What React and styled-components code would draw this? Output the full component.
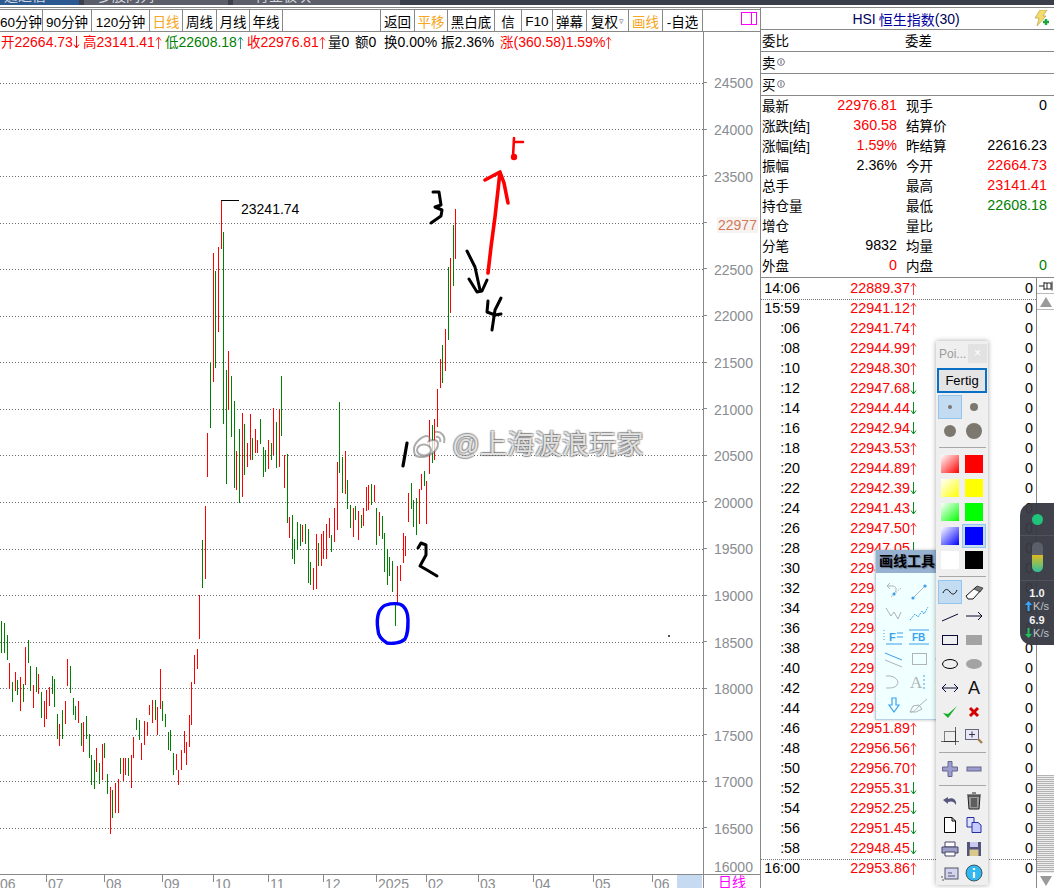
import React from 'react';
import styled, { createGlobalStyle } from 'styled-components';

const GlobalStyle = createGlobalStyle`
  html, body { margin: 0; padding: 0; background: #fff; }
  body { font-family: "Liberation Sans", "Noto Sans CJK SC", sans-serif; font-size: 14px; color: #000; }
`;

const LINE = '#888888';
const RED = '#ff0000';
const GREEN = '#008000';
const ORANGE = '#f5a623';

/* ---------- page frame ---------- */
const Page = styled.div`
  position: relative;
  width: 1054px;
  height: 888px;
  overflow: hidden;
  background: #fff;
`;

const TopStrip = styled.div`
  display: flex;
  height: 5px;
  overflow: hidden;
  background: #3b3e4b;
`;

const Tab = styled.div`
  width: ${p => p.$w}px;
  margin-right: ${p => p.$gap || 0}px;
  background: ${p => p.$tone};
  color: #d5d8de;
  font-size: 14px;
  line-height: 16px;
  padding-left: ${p => p.$pad}px;
  white-space: nowrap;
  overflow: hidden;
  & > span { display: block; margin-top: -12px; }
`;

const Main = styled.div`
  display: flex;
  height: 881px;
  margin-top: 2px;
  border-top: 1px solid ${LINE};
`;

const LeftColumn = styled.div`
  display: flex;
  flex-direction: column;
  width: 760px;
  flex: none;
`;

/* ---------- toolbar ---------- */
const Toolbar = styled.div`
  display: flex;
  height: 21px;
  margin-top: 1px;
  border-top: 1px solid ${LINE};
  border-bottom: 1px solid ${LINE};
  font-size: 13.5px;
`;

const ToolButton = styled.div`
  width: ${p => p.$w}px;
  flex: none;
  box-sizing: border-box;
  padding-top: 1px;
  display: flex;
  align-items: center;
  justify-content: center;
  white-space: nowrap;
  border-right: 1px solid ${LINE};
  color: ${p => (p.$on ? ORANGE : '#000')};
`;

const Caret = styled.span`
  color: #667;
  font-size: 9px;
  margin-left: 1px;
`;

const ToolSpacer = styled.div`
  width: ${p => p.$w}px;
  flex: none;
  box-sizing: border-box;
  border-right: ${p => (p.$last ? 'none' : `1px solid ${LINE}`)};
  display: flex;
  justify-content: flex-end;
  padding: 2px 3px 0 0;
`;

const WindowBox = styled.svg`
  display: block;
`;

/* ---------- chart ---------- */
const ChartRow = styled.div`
  display: flex;
  height: 842px;
`;

const Plot = styled.div`
  width: 703px;
  flex: none;
  display: flex;
  flex-direction: column;
  position: relative;
`;

const InfoRow = styled.div`
  display: flex;
  height: 20px;
  box-sizing: border-box;
  padding: 0 0 2px 1px;
  align-items: center;
  white-space: nowrap;
  font-size: 14px;
`;

const InfoField = styled.span`
  width: ${p => p.$w}px;
  flex: none;
  color: ${p => p.$color || '#000'};
`;

const Han = styled.span`
  font-size: 13.5px;
`;

const Axis = styled.div`
  width: 57px;
  flex: none;
  box-sizing: border-box;
  border-left: 1px solid ${LINE};
  padding-top: 28.2px;
  display: flex;
  flex-direction: column;
  color: #8a8d92;
  font-size: 14px;
`;

const Tick = styled.div`
  height: 46.6px;
  flex: none;
  display: flex;
  align-items: center;
  &::before {
    content: "";
    width: 3px;
    height: 1px;
    margin-right: 7px;
    background: ${LINE};
    transform: translateY(-1px);
  }
`;

const LastTick = styled.div`
  flex: 1;
  display: flex;
  align-items: flex-end;
  padding: 0 0 0 10px;
  line-height: 14px;
`;

const LastPrice = styled.span`
  margin: 3px 0 0 3px;
  padding: 0 1px;
  background: #f7f3f1;
  color: #d2785c;
  line-height: 16px;
`;

const BottomRow = styled.div`
  display: flex;
  flex: 1;
  border-top: 1px solid ${LINE};
`;

const TimeAxis = styled.div`
  width: 703px;
  flex: none;
  display: flex;
  overflow: hidden;
  color: #8a8d92;
  font-size: 14px;
`;

const Month = styled.div`
  width: ${p => p.$w}px;
  flex: none;
  box-sizing: border-box;
  margin-left: ${p => p.$shift || 0}px;
  padding: 1px 0 0 2px;
  line-height: 16px;
  white-space: nowrap;
  background: linear-gradient(${LINE}, ${LINE}) no-repeat left top / ${p => (p.$noTick ? '0' : '1px')} 7px;
`;

const Scope = styled.div`
  width: 25px;
  flex: none;
  background: #c6daf1;
`;

const PeriodCell = styled.div`
  width: 57px;
  flex: none;
  box-sizing: border-box;
  border-left: 1px solid ${LINE};
  color: #ff00ff;
  font-size: 14px;
  line-height: 14px;
  padding-left: 14px;
`;

/* ---------- right panel ---------- */
const Panel = styled.div`
  width: 294px;
  flex: none;
  box-sizing: border-box;
  border-left: 1px solid ${LINE};
  display: flex;
  flex-direction: column;
`;

const PanelHead = styled.div`
  height: 22px;
  box-sizing: border-box;
  border-bottom: 1px solid ${LINE};
  display: flex;
  align-items: center;
  justify-content: center;
  position: relative;
  padding-right: 3px;
  color: #00005a;
  font-size: 14px;
`;

const HeadName = styled.span`
  color: #0000a0;
  font-size: 14px;
  margin-left: 3px;
`;

const Bolt = styled.svg`
  position: absolute;
  right: 5px;
  top: 2px;
`;

const QuoteRow = styled.div`
  height: 22px;
  box-sizing: border-box;
  border-bottom: 1px solid ${LINE};
  padding: 0 0 2px 1px;
  display: flex;
  align-items: center;
  font-size: 13.5px;
`;

const QuoteCell = styled.span`
  width: ${p => p.$w}px;
  flex: none;
`;

const Circled = styled.svg`
  margin-left: 1px;
`;

const Stats = styled.div`
  height: 182px;
  box-sizing: border-box;
  border-bottom: 1px solid ${LINE};
  padding: 0 6px 0 1px;
  display: grid;
  grid-template-columns: 135px 141px;
  column-gap: 9px;
  grid-auto-rows: 20px;
`;

const StatCell = styled.div`
  display: flex;
  justify-content: space-between;
  align-items: center;
  padding-bottom: 2px;
  white-space: nowrap;
`;

const StatLabel = styled.span`
  font-size: 13.5px;
`;

const StatValue = styled.span`
  font-size: 14.3px;
  color: ${p => p.$color || '#000'};
`;

const TradesArea = styled.div`
  flex: 1;
  display: flex;
  min-height: 0;
`;

const TradeList = styled.div`
  width: 275px;
  flex: none;
  overflow: hidden;
`;

const TradeRow = styled.div`
  display: grid;
  grid-template-columns: 39px 117px 116px;
  height: ${p => (p.$sep ? 19 : 20)}px;
  margin-top: ${p => (p.$sep ? 1 : 0)}px;
  box-sizing: border-box;
  align-items: center;
  border-top: ${p => (p.$sep ? '1px dotted #777' : 'none')};
  padding-bottom: ${p => (p.$sep ? 2 : 0)}px;
  font-size: 14.3px;
`;

const TradeTime = styled.span`
  text-align: right;
`;

const TradePrice = styled.span`
  text-align: right;
  color: ${RED};
`;

const TradeVol = styled.span`
  text-align: right;
`;

const ArrowSvg = styled.svg`
  vertical-align: -2px;
`;

const ScrollBar = styled.div`
  width: 18px;
  flex: none;
  box-sizing: border-box;
  border-left: 1px solid ${LINE};
  display: flex;
  flex-direction: column;
`;

const ScrollButton = styled.div`
  height: 15px;
  flex: none;
  display: flex;
  align-items: center;
  justify-content: center;
  border-bottom: 1px solid #bbb;
`;

const ScrollTrack = styled.div`
  flex: 1;
  display: flex;
  flex-direction: column;
  justify-content: flex-end;
`;

const ScrollThumb = styled.div`
  height: 98px;
  background: repeating-linear-gradient(#b4b4b4 0 1px, #ececec 1px 2px);
`;

/* ---------- floating windows ---------- */
const DrawWindow = styled.div`
  position: absolute;
  left: 875px;
  top: 550px;
  width: 90px;
  height: 170px;
  box-sizing: border-box;
  background: #f0ffff;
  border: 1px solid #bcd0e4;
  border-top: none;
  box-shadow: 0 0 3px rgba(0, 0, 0, 0.25);
`;

const DrawTitle = styled.div`
  height: 23px;
  background: #97b1d0;
  font-weight: 700;
  font-size: 14px;
  line-height: 23px;
  padding-left: 3px;
  color: #000;
  text-shadow: 1px 1px 1px #5d6f8a;
`;

const DrawGrid = styled.div`
  display: grid;
  grid-template-columns: repeat(3, 25px);
  grid-auto-rows: 22.7px;
  padding: 7px 0 0 5px;
`;

const DrawCell = styled.div`
  display: flex;
  align-items: center;
  justify-content: center;
`;

const PointWindow = styled.div`
  position: absolute;
  left: 936px;
  top: 341px;
  width: 52px;
  height: 544px;
  box-sizing: border-box;
  padding: 3px 0 0 2px;
  background: #efefef;
  box-shadow: 0 0 5px rgba(0, 0, 0, 0.35);
`;

const PointTitle = styled.div`
  display: flex;
  justify-content: space-between;
  height: 20px;
  margin: 0 1px 4px 0;
  color: #9a9a9a;
  font-size: 12px;
  line-height: 20px;
  padding-left: 1px;
`;

const CloseBox = styled.div`
  width: 19px;
  height: 19px;
  background: #e2e2e2;
  color: #fff;
  text-align: center;
  line-height: 18px;
  font-size: 12px;
`;

const DoneButton = styled.div`
  width: 50px;
  height: 25px;
  box-sizing: border-box;
  margin: 0 0 2px -1px;
  border: 2px solid #0a70c6;
  background: #e4e4e4;
  text-align: center;
  font-size: 13px;
  line-height: 21px;
`;

const ButtonGrid = styled.div`
  display: grid;
  grid-template-columns: repeat(2, 24px);
  grid-auto-rows: 24px;
`;

const PointButton = styled.div`
  display: flex;
  align-items: center;
  justify-content: center;
  box-sizing: border-box;
  background: ${p => (p.$on ? '#c3dcf1' : 'transparent')};
  border: 1px solid ${p => (p.$on ? '#93c5ee' : 'transparent')};
  font-size: 18px;
  color: #111;
`;

const Swatch = styled.div`
  width: 18px;
  height: 18px;
  background: ${p => p.$fill};
`;

const Divider = styled.div`
  height: 1px;
  background: #a8a8a8;
  margin: 4px 2px 3.5px 1px;
`;

/* ---------- net speed widget ---------- */
const NetWidget = styled.div`
  position: absolute;
  left: 1020px;
  top: 503px;
  width: 34px;
  height: 142px;
  box-sizing: border-box;
  background: rgba(55, 58, 68, 0.96);
  border-radius: 12px 0 0 12px;
  display: flex;
  flex-direction: column;
  align-items: center;
  color: #dfe2e8;
`;

const NetDot = styled.div`
  width: 11px;
  height: 11px;
  border-radius: 50%;
  background: #1fc47a;
  margin: 11px 0 10px;
  flex: none;
`;

const NetRule = styled.div`
  width: 100%;
  height: 1px;
  background: #50535e;
  flex: none;
`;

const NetPill = styled.div`
  width: 11px;
  height: 30px;
  margin: 6px 0 8px;
  flex: none;
  border-radius: 6px;
  background: linear-gradient(#5b5f69 0 43%, #e0b81e 43%, #8cc05a 70%, #2dbfa0 100%);
`;

const NetValue = styled.div`
  font-size: 11px;
  font-weight: 700;
  line-height: 13px;
  color: #f2f3f5;
  margin-top: ${p => p.$top}px;
`;

const NetRate = styled.div`
  display: flex;
  align-items: center;
  gap: 1px;
  font-size: 11px;
  line-height: 12px;
  color: #bfc2c9;
`;

/* ---------- watermark ---------- */
const Watermark = styled.div`
  position: absolute;
  left: 410px;
  top: 396px;
  display: flex;
  align-items: center;
  gap: 2px;
  white-space: nowrap;
  font-size: 27.3px;
  line-height: 34px;
  color: rgba(255, 255, 255, 0.75);
  text-shadow: -1px -1px 1px rgba(90, 90, 90, 0.45), 1px 1px 1px rgba(90, 90, 90, 0.45),
    1px -1px 1px rgba(90, 90, 90, 0.45), -1px 1px 1px rgba(90, 90, 90, 0.45);
`;

/* ---------- data ---------- */
const bars = [
  [1,621,653,'g'],[4,623,653,'g'],[7,635,660,'g'],[9,663,689,'r'],[12,682,702,'g'],[15,672,691,'r'],[17,680,695,'g'],
  [20,677,711,'r'],[23,684,702,'g'],[25,647,685,'r'],[28,640,663,'g'],[30,666,691,'g'],[33,685,708,'r'],[36,667,692,'g'],
  [38,674,694,'r'],[41,692,718,'g'],[44,701,727,'r'],[46,690,719,'r'],[49,687,706,'r'],[52,676,694,'g'],[54,679,707,'g'],
  [57,714,739,'g'],[59,724,746,'r'],[62,710,739,'g'],[65,701,724,'r'],[67,659,686,'r'],[70,666,693,'g'],[73,698,715,'g'],
  [75,706,720,'g'],[78,701,723,'r'],[81,723,746,'g'],[83,722,752,'r'],[86,716,739,'g'],[89,734,758,'g'],[91,755,785,'g'],
  [94,760,789,'g'],[96,748,772,'r'],[99,763,784,'g'],[102,744,780,'r'],[104,743,758,'g'],[107,774,794,'g'],[110,787,834,'r'],
  [112,790,818,'g'],[115,783,813,'r'],[118,779,813,'r'],[120,758,774,'g'],[123,758,781,'r'],[125,758,775,'r'],[128,758,776,'g'],
  [131,755,788,'r'],[133,737,758,'r'],[136,718,730,'g'],[139,720,740,'g'],[141,743,760,'r'],[144,721,745,'r'],[147,722,736,'r'],
  [149,705,715,'r'],[152,700,723,'r'],[155,700,720,'g'],[157,707,735,'r'],[160,669,709,'r'],[162,701,721,'g'],[165,714,727,'g'],
  [168,732,750,'g'],[170,730,751,'g'],[173,753,775,'g'],[176,754,770,'r'],[178,770,785,'r'],[181,750,770,'r'],[184,731,753,'r'],
  [186,742,765,'r'],[189,715,747,'r'],[191,682,725,'r'],[194,655,684,'r'],[197,649,669,'r'],[199,595,639,'r'],[202,540,588,'g'],
  [205,506,579,'r'],[207,433,477,'r'],[210,363,428,'g'],[213,253,382,'r'],[215,271,368,'g'],[218,247,332,'r'],[221,200,249,'r'],
  [223,232,424,'g'],[226,370,484,'g'],[228,351,410,'r'],[231,376,437,'g'],[234,401,488,'g'],[236,451,490,'r'],[239,429,503,'g'],
  [242,413,497,'r'],[244,424,475,'g'],[247,443,467,'r'],[250,414,460,'r'],[252,438,460,'g'],[255,429,453,'r'],[257,440,453,'r'],
  [260,419,444,'g'],[263,447,477,'g'],[265,450,472,'g'],[268,440,469,'r'],[271,443,460,'g'],[273,408,455,'r'],[276,422,468,'g'],
  [279,409,467,'r'],[281,376,436,'g'],[284,455,488,'r'],[287,454,523,'g'],[289,517,538,'r'],[292,515,559,'g'],[294,539,564,'g'],
  [297,522,550,'g'],[300,524,546,'g'],[302,525,542,'r'],[305,524,544,'g'],[308,529,583,'g'],[310,562,585,'g'],[313,568,590,'r'],
  [316,534,589,'r'],[318,543,566,'g'],[321,534,566,'r'],[323,531,559,'r'],[326,524,559,'r'],[329,518,538,'r'],[331,535,552,'g'],
  [334,508,542,'r'],[337,462,530,'r'],[339,402,473,'g'],[342,457,493,'g'],[345,451,494,'r'],[347,480,509,'g'],[350,505,528,'g'],
  [353,508,537,'r'],[355,506,520,'g'],[358,511,540,'r'],[361,515,528,'g'],[363,508,526,'r'],[366,487,511,'r'],[368,485,510,'r'],
  [371,484,505,'g'],[374,485,502,'r'],[376,508,545,'g'],[379,512,536,'r'],[382,516,539,'g'],[384,533,572,'g'],[387,549,585,'g'],
  [389,557,576,'g'],[392,561,592,'g'],[395,602,626,'g'],[397,566,605,'r'],[400,565,581,'r'],[403,533,563,'r'],[405,536,556,'r'],
  [408,493,522,'r'],[411,483,509,'g'],[413,500,527,'g'],[416,498,535,'g'],[419,489,524,'r'],[421,474,490,'r'],[424,471,486,'g'],
  [426,481,524,'r'],[429,420,474,'r'],[432,425,463,'g'],[434,419,460,'r'],[437,389,427,'r'],[440,359,388,'r'],[442,345,383,'g'],
  [445,329,371,'r'],[448,267,340,'g'],[450,258,313,'r'],[453,225,286,'g'],[455,209,259,'r'],
];

const gridLines = [83,129,176,223,269,316,362,409,455,502,549,595,642,688,735,781,828];
const axisLabels = [24500,24000,23500,22977,22500,22000,21500,21000,20500,20000,19500,19000,18500,18000,17500,17000,16500];

const tradeRows = [
  ['14:06','22889.37','u'],['15:59','22941.12','u',true],[':06','22941.74','u'],[':08','22944.99','u'],[':10','22948.30','u'],
  [':12','22947.68','d'],[':14','22944.44','d'],[':16','22942.94','d'],[':18','22943.53','u'],[':20','22944.89','u'],
  [':22','22942.39','d'],[':24','22941.43','d'],[':26','22947.50','u'],[':28','22947.05','d'],[':30','22948.12','u'],
  [':32','22949.36','u'],[':34','22950.18','u'],[':36','22949.72','d'],[':38','22950.64','u'],[':40','22951.20','u'],
  [':42','22950.83','d'],[':44','22951.02','u'],[':46','22951.89','u'],[':48','22956.56','u'],[':50','22956.70','u'],
  [':52','22955.31','d'],[':54','22952.25','d'],[':56','22951.45','d'],[':58','22948.45','d'],['16:00','22953.86','u',true],
];

const stats = [
  ['最新','22976.81',RED,'现手','0','#000'],
  ['涨跌[结]','360.58',RED,'结算价','',''],
  ['涨幅[结]','1.59%',RED,'昨结算','22616.23','#000'],
  ['振幅','2.36%','#000','今开','22664.73',RED],
  ['总手','','','最高','23141.41',RED],
  ['持仓量','','','最低','22608.18',GREEN],
  ['增仓','','','量比','',''],
  ['分笔','9832','#000','均量','',''],
  ['外盘','0',RED,'内盘','0',GREEN],
];

const months = [
  { w: 48, label: '06', noTick: true, shift: -2 },
  { w: 58, label: '07' }, { w: 58, label: '08' }, { w: 51, label: '09' }, { w: 55, label: '10' },
  { w: 55, label: '11' }, { w: 53, label: '12' }, { w: 50, label: '2025' }, { w: 52, label: '02' },
  { w: 55, label: '03' }, { w: 60, label: '04' }, { w: 59, label: '05' }, { w: 25, label: '06' },
];

/* ---------- drawings ---------- */
const Ink = ({ d, color = '#000', width = 3 }) => (
  <path d={d} fill="none" stroke={color} strokeWidth={width} strokeLinecap="round" strokeLinejoin="round" />
);

const Chart = () => (
  <svg width="703" height="822" viewBox="0 52 703 822" style={{ display: 'block' }}>
    {gridLines.map(y => (
      <line key={y} x1="0" x2="703" y1={y + 0.5} y2={y + 0.5} stroke="#6e6e6e" strokeDasharray="1 2" />
    ))}
    {bars.map(([x, top, bottom, c]) => (
      <rect key={x} x={x} y={top} width="1" height={bottom - top} fill={c === 'r' ? RED : GREEN} />
    ))}
    <rect x="221" y="200" width="18" height="1" fill="#000" />
    <text x="241" y="214" fontSize="14" fontFamily="Liberation Sans" fill="#000">23241.74</text>
    <rect x="668" y="635" width="2" height="2" fill="#555" />

    {/* hand drawn wave marks */}
    <Ink d="M514 138 L513 157 M514 142 L523 142" color={RED} width="2.6" />
    <circle cx="514" cy="157" r="3.2" fill={RED} />
    <Ink d="M488 273 L491 247 L495 217 L498 190 L500 172 M485 180 L500 172 L504 183 L508 203" color={RED} width="3.6" />
    <Ink d="M433 192 L439 192 L441 205 L435 207 L442 210 L441 216 L431 223" />
    <Ink d="M467 251 L475 267 L480 290 M469 279 L477 292 L482 291 L487 280" />
    <Ink d="M488 301 L487 312 L495 315 L501 314 M501 298 L495 310 L492 330" />
    <Ink d="M407 443 L403 466" width="3.2" />
    <Ink d="M418 548 L421 543 L426 545 L426 555 L420 566 L427 570 L437 576" />
    <Ink d="M386 605 C392 603 400 603 403 606 C407 610 408 614 408 620 C408 628 408 634 405 639 C401 643 392 644 387 643 C382 640 378 636 378 630 C377 624 377 617 379 612 C381 608 383 606 386 605 Z" color="#0000ff" width="3.4" />
  </svg>
);

const WeiboMark = () => (
  <svg width="40" height="34" viewBox="0 0 40 34" style={{ flex: 'none' }}>
    <g fill="rgba(255,255,255,.75)" stroke="rgba(90,90,90,.5)" strokeWidth="2">
      <path d="M4 21c0-6 8-13 13-13 3 0 3 3 2 5 5-2 9-1 9 3 0 7-9 13-16 13S4 27 4 21z" />
      <ellipse cx="14" cy="22" rx="7" ry="5.5" />
      <path d="M25 4c6-1 11 4 9 11M26 9c3-1 5 2 4 5" fill="none" />
    </g>
  </svg>
);

const Bolt16 = () => (
  <Bolt width="15" height="17" viewBox="0 0 15 17">
    <path d="M6 0 L13 0 L9 6 L12 6 L3 16 L5 8 L1 8 Z" fill="#f3dc6a" stroke="#b8a24a" strokeWidth="0.7" />
    <path d="M9 12 h6 M12 9 v6" stroke="#18a83a" strokeWidth="2.4" />
  </Bolt>
);

const CircledOne = () => (
  <Circled width="8" height="8" viewBox="0 0 8 8">
    <circle cx="4" cy="4" r="3.4" fill="none" stroke="#667" strokeWidth="0.9" />
    <path d="M4 2 V6" stroke="#667" />
  </Circled>
);

const Arrow = ({ dir, color }) => (
  <ArrowSvg width="7" height="13" viewBox="0 0 7 13">
    <path
      d={dir === 'u' ? 'M3.5 1 V13 M1 4.5 L3.5 1 L6 4.5' : 'M3.5 0 V12 M1 8.5 L3.5 12 L6 8.5'}
      fill="none"
      stroke={color || (dir === 'u' ? '#ff3a3a' : '#0a8a28')}
    />
  </ArrowSvg>
);

const TI = ({ children, w = 20, h = 20 }) => (
  <svg width={w} height={h} viewBox={`0 0 ${w} ${h}`}>{children}</svg>
);

const pointIcons = [
  <TI><path d="M3 11 C5 6 8 7 10 10 C12 13 15 13 17 8" fill="none" stroke="#111" /></TI>,
  <TI><path d="M2 14 L12 5 L18 7 L9 17 L4 17 Z" fill="#fff" stroke="#111" /><path d="M10 7 L13 4 L19 6 L16 10 Z" fill="#777" stroke="#111" strokeWidth="0.6" /></TI>,
  <TI><path d="M2 15 L18 8" stroke="#0a0a33" fill="none" /></TI>,
  <TI><path d="M2 10 H18 M14 6 L18 10 L14 14" stroke="#0a0a33" fill="none" /></TI>,
  <TI><rect x="2.5" y="5.5" width="15" height="9" fill="none" stroke="#0a0a33" /></TI>,
  <TI><rect x="2" y="5" width="16" height="10" fill="#a3a3a3" /></TI>,
  <TI><ellipse cx="10" cy="10" rx="7.5" ry="4.5" fill="none" stroke="#000" /></TI>,
  <TI><ellipse cx="10" cy="10" rx="8" ry="5" fill="#a3a3a3" /></TI>,
  <TI><path d="M2 10 H18 M6 6 L2 10 L6 14 M14 6 L18 10 L14 14" stroke="#0a0a33" fill="none" /></TI>,
  'A',
  <TI><path d="M3 11 L8 16 L17 4 L8 12 Z" fill="#18b028" /></TI>,
  <TI><path d="M6 6 L14 14 M14 6 L6 14" stroke="#d40000" strokeWidth="3" /></TI>,
  <TI><path d="M1 15.5 H19 M15.5 1 V19" stroke="#666" fill="none" /><rect x="4.5" y="5.5" width="11" height="10" fill="none" stroke="#111" strokeDasharray="1 1" /></TI>,
  <TI><rect x="1.5" y="3.5" width="13" height="10" fill="#e8e8f8" stroke="#667" /><path d="M5 8.5 H11 M8 5.5 V11.5" stroke="#334" /><path d="M14 13 L18 17" stroke="#a58050" strokeWidth="2.4" /></TI>,
  <TI><path d="M8 2.5 H12 V8 H17.5 V12 H12 V17.5 H8 V12 H2.5 V8 H8 Z" fill="#9c9ccf" stroke="#66668f" /></TI>,
  <TI><rect x="3" y="8" width="14" height="4" fill="#9c9ccf" stroke="#66668f" /></TI>,
  <TI><path d="M3 9 L8 6 V8 C12 6 17 8 16 14 C14 10 11 10 8 11 V13 Z" fill="#56567e" /></TI>,
  <TI><path d="M4 5 H16 L15 18 H5 Z" fill="#9a9a9a" stroke="#222" /><path d="M3 4 H17 M8 2 H12 M8 7 V16 M10 7 V16 M12 7 V16" stroke="#222" /></TI>,
  <TI><path d="M4.5 2.5 H12 L15.5 6 V17.5 H4.5 Z M12 2.5 V6 H15.5" fill="#fff" stroke="#000" /></TI>,
  <TI><path d="M3 2.5 H10 V12 H3 Z" fill="#dfe2ff" stroke="#2530a0" /><path d="M8 7.5 H14 L17 10 V17.5 H8 Z" fill="#c6ccff" stroke="#2530a0" /></TI>,
  <TI><path d="M5 3 H15 V8 H5 Z" fill="#fff" stroke="#446" /><path d="M2 8 H18 V14 H2 Z" fill="#9ca0c8" stroke="#446" /><path d="M5 13 H15 V17 H5 Z" fill="#fff" stroke="#446" /></TI>,
  <TI><rect x="3" y="3" width="14" height="14" fill="#53537c" /><rect x="6" y="3" width="8" height="5" fill="#c9c9ee" /><rect x="5.5" y="10.5" width="9" height="6.5" fill="#d8c88a" /></TI>,
  <TI><rect x="5" y="5" width="13" height="11" fill="#d2d4f0" stroke="#556" /><path d="M8 10 H12 M8 13 H15 M1 14 H3 M2 17 H4" stroke="#556" /></TI>,
  <TI><circle cx="10" cy="10" r="8" fill="#32b8f0" stroke="#222" strokeWidth="0.7" /><path d="M10 9 V15 M10 5 V7" stroke="#fff" strokeWidth="2.2" /></TI>,
];

const G = '#aeb4b8';
const B = '#3aa3ee';
// three columns, six rows; the third column sits mostly behind the point window
const drawIcons = [
  <TI w={22}><path d="M10 5 H4 M4 5 L7 2 M4 5 L7 8 M10 5 C14 6 14 10 11 12" stroke={G} fill="none" /><path d="M8 16 L18 7" stroke={G} strokeDasharray="2 1" /><circle cx="11" cy="13" r="1.6" fill={B} /></TI>,
  <TI w={22}><path d="M5 17 L17 5" stroke={G} /><circle cx="5" cy="17" r="1.6" fill={B} /><circle cx="17" cy="5" r="1.6" fill={B} /></TI>,
  <TI w={22}><path d="M3 14 L18 6" stroke={G} /></TI>,
  <TI w={22}><path d="M3 4 L8 12 L11 8 L15 15 L18 8" stroke={G} fill="none" /></TI>,
  <TI w={22}><path d="M2 16 L7 10 L10 13 L14 7 L16 10 L20 3" stroke={B} strokeDasharray="2 1" fill="none" /></TI>,
  <TI w={22}><path d="M3 14 L9 7 L12 11 L18 5" stroke={G} strokeDasharray="2 1" fill="none" /></TI>,
  <TI w={22}><path d="M1 3 V14" stroke={B} strokeDasharray="1 2" /><path d="M3 17 H19" stroke={B} /><text x="6" y="14" fontSize="11" fontWeight="700" fontFamily="Liberation Sans" fill={B}>F</text><path d="M14 6 H20 M14 10 H20" stroke={B} /></TI>,
  <TI w={22}><path d="M1 3 H21 M1 17 H21" stroke={B} /><text x="4" y="14" fontSize="10" fontWeight="700" fontFamily="Liberation Sans" fill={B}>FB</text></TI>,
  <TI w={22}><path d="M3 5 H14 M3 10 H14 M3 15 H14" stroke={B} /></TI>,
  <TI w={22}><path d="M2 4 L19 11" stroke={B} /><path d="M2 11 L19 18" stroke={G} /></TI>,
  <TI w={22}><rect x="4.5" y="4.5" width="14" height="11" fill="none" stroke={G} /></TI>,
  <TI w={22}><ellipse cx="11" cy="10" rx="8" ry="6" fill="none" stroke={G} /></TI>,
  <TI w={22}><path d="M3 4 C12 3 17 9 14 13 C12 16 8 16 3 16" stroke={G} fill="none" /></TI>,
  <TI w={22}><text x="2" y="16" fontSize="17" fontFamily="Liberation Serif" fill={G}>A</text><path d="M16 3 V18" stroke={B} strokeDasharray="2 2" /></TI>,
  <TI w={22}><circle cx="11" cy="10" r="7.5" fill="none" stroke={G} strokeWidth="1.5" /></TI>,
  <TI w={22}><path d="M9 3 H13 V10 H16 L11 17 L6 10 H9 Z" fill="none" stroke={B} strokeWidth="1.2" /></TI>,
  <TI w={22}><path d="M2 17 C7 17 8 14 11 11 L19 4 M2 17 L5 11 L11 10 L14 14 L8 17 Z" stroke={G} fill="none" /></TI>,
  <TI w={22}><path d="M3 5 H12 M3 10 H12" stroke={B} /></TI>,
];

const swatches = [
  ['linear-gradient(135deg,#fff,#ff0000)', RED],
  ['linear-gradient(135deg,#fff,#ffff00)', '#ffff00'],
  ['linear-gradient(135deg,#fff,#00ff00)', '#00ff00'],
  ['linear-gradient(135deg,#fff,#0000ff)', '#0000ff'],
  ['#ffffff', '#000000'],
];

const Dot = ({ r }) => (
  <svg width="20" height="20" viewBox="0 0 20 20"><circle cx="10" cy="10" r={r} fill="#7c786f" /></svg>
);

export default function App() {
  return (
    <Page>
      <GlobalStyle />
      <TopStrip>
        <Tab $w={75} $gap={5} $tone="#2c5a90" $pad={4}><span>通达信</span></Tab>
        <Tab $w={130} $gap={5} $tone="#5c5f6a" $pad={14}><span>多股同列</span></Tab>
        <Tab $w={145} $tone="#5c5f6a" $pad={22}><span>行业板块</span></Tab>
      </TopStrip>

      <Main>
        <LeftColumn>
          <Toolbar>
            <ToolButton $w={43}>60分钟</ToolButton>
            <ToolButton $w={49}>90分钟</ToolButton>
            <ToolButton $w={58}>120分钟</ToolButton>
            <ToolButton $w={33} $on>日线</ToolButton>
            <ToolButton $w={34}>周线</ToolButton>
            <ToolButton $w={33}>月线</ToolButton>
            <ToolButton $w={33}>年线</ToolButton>
            <ToolSpacer $w={98} />
            <ToolButton $w={34}>返回</ToolButton>
            <ToolButton $w={33} $on>平移</ToolButton>
            <ToolButton $w={47}>黑白底</ToolButton>
            <ToolButton $w={27}>信</ToolButton>
            <ToolButton $w={31}>F10</ToolButton>
            <ToolButton $w={34}>弹幕</ToolButton>
            <ToolButton $w={42}>复权<Caret>▿</Caret></ToolButton>
            <ToolButton $w={34} $on>画线</ToolButton>
            <ToolButton $w={40}>-自选</ToolButton>
            <ToolSpacer $w={57} $last>
              <WindowBox width="16" height="13" viewBox="0 0 16 13">
                <rect x="0.5" y="0.5" width="15" height="12" fill="none" stroke="#ff00ff" />
                <path d="M10.5 0 V13" stroke="#ff00ff" />
              </WindowBox>
            </ToolSpacer>
          </Toolbar>

          <ChartRow>
            <Plot>
              <InfoRow>
                <InfoField $w={82} $color={RED}><Han>开</Han>22664.73<Arrow dir="d" color={RED} /></InfoField>
                <InfoField $w={82} $color={RED}><Han>高</Han>23141.41<Arrow dir="u" /></InfoField>
                <InfoField $w={82} $color={GREEN}><Han>低</Han>22608.18<Arrow dir="u" color="#2a9a8a" /></InfoField>
                <InfoField $w={81} $color={RED}><Han>收</Han>22976.81<Arrow dir="u" /></InfoField>
                <InfoField $w={27}><Han>量</Han>0</InfoField>
                <InfoField $w={29}><Han>额</Han>0</InfoField>
                <InfoField $w={57}><Han>换</Han>0.00%</InfoField>
                <InfoField $w={59}><Han>振</Han>2.36%</InfoField>
                <InfoField $w={125} $color={RED}><Han>涨</Han>(360.58)1.59%<Arrow dir="u" /></InfoField>
              </InfoRow>
              <Chart />
              <Watermark>
                <WeiboMark />
                <span>@上海波浪玩家</span>
              </Watermark>
            </Plot>
            <Axis>
              {axisLabels.map(v => (
                <Tick key={v}>{v === 22977 ? <LastPrice>{v}</LastPrice> : v}</Tick>
              ))}
              <LastTick>16000</LastTick>
            </Axis>
          </ChartRow>

          <BottomRow>
            <TimeAxis>
              {months.map((m, i) => (
                <Month key={i} $w={m.w} $noTick={m.noTick} $shift={m.shift}>{m.label}</Month>
              ))}
              <Scope />
            </TimeAxis>
            <PeriodCell>日线</PeriodCell>
          </BottomRow>
        </LeftColumn>

        <Panel>
          <PanelHead>HSI<HeadName>恒生指数</HeadName>(30)<Bolt16 /></PanelHead>
          <QuoteRow><QuoteCell $w={143}>委比</QuoteCell><QuoteCell $w={60}>委差</QuoteCell></QuoteRow>
          <QuoteRow>卖<CircledOne /></QuoteRow>
          <QuoteRow>买<CircledOne /></QuoteRow>
          <Stats>
            {stats.map(s => (
              <React.Fragment key={s[0]}>
                <StatCell><StatLabel>{s[0]}</StatLabel><StatValue $color={s[2]}>{s[1]}</StatValue></StatCell>
                <StatCell><StatLabel>{s[3]}</StatLabel><StatValue $color={s[5]}>{s[4]}</StatValue></StatCell>
              </React.Fragment>
            ))}
          </Stats>
          <TradesArea>
            <TradeList>
              {tradeRows.map(([time, price, dir, sep]) => (
                <TradeRow key={time} $sep={sep}>
                  <TradeTime>{time}</TradeTime>
                  <TradePrice>{price}<Arrow dir={dir} /></TradePrice>
                  <TradeVol>0</TradeVol>
                </TradeRow>
              ))}
            </TradeList>
            <ScrollBar>
              <ScrollButton>
                <svg width="14" height="12" viewBox="0 0 14 12">
                  <path d="M0 6 H5 M5 2 V10 M5 3 H12 V9 H5 M8 3 V9 M13 1.5 V10.5" stroke="#222" fill="none" />
                </svg>
              </ScrollButton>
              <ScrollButton>
                <svg width="12" height="10" viewBox="0 0 12 10"><path d="M6 0 L12 10 H0 Z" fill="#9a9a9a" /></svg>
              </ScrollButton>
              <ScrollTrack><ScrollThumb /></ScrollTrack>
              <ScrollButton>
                <svg width="12" height="10" viewBox="0 0 12 10"><path d="M6 10 L12 0 H0 Z" fill="#9a9a9a" /></svg>
              </ScrollButton>
            </ScrollBar>
          </TradesArea>
        </Panel>
      </Main>

      <DrawWindow>
        <DrawTitle>画线工具</DrawTitle>
        <DrawGrid>
          {drawIcons.map((icon, i) => <DrawCell key={i}>{icon}</DrawCell>)}
        </DrawGrid>
      </DrawWindow>

      <PointWindow>
        <PointTitle>Poi...<CloseBox>×</CloseBox></PointTitle>
        <DoneButton>Fertig</DoneButton>
        <ButtonGrid>
          <PointButton $on><Dot r={2} /></PointButton>
          <PointButton><Dot r={4} /></PointButton>
          <PointButton><Dot r={6} /></PointButton>
          <PointButton><Dot r={8} /></PointButton>
        </ButtonGrid>
        <Divider />
        <ButtonGrid>
          {swatches.map(([soft, solid]) => (
            <React.Fragment key={solid}>
              <PointButton><Swatch $fill={soft} /></PointButton>
              <PointButton $on={solid === '#0000ff'}><Swatch $fill={solid} /></PointButton>
            </React.Fragment>
          ))}
        </ButtonGrid>
        <Divider />
        <ButtonGrid>
          {pointIcons.slice(0, 14).map((icon, i) => (
            <PointButton key={i} $on={i === 0}>{icon}</PointButton>
          ))}
        </ButtonGrid>
        <Divider />
        <ButtonGrid>
          {pointIcons.slice(14, 16).map((icon, i) => <PointButton key={i}>{icon}</PointButton>)}
        </ButtonGrid>
        <Divider />
        <ButtonGrid>
          {pointIcons.slice(16).map((icon, i) => <PointButton key={i}>{icon}</PointButton>)}
        </ButtonGrid>
      </PointWindow>

      <NetWidget>
        <NetDot />
        <NetRule />
        <NetPill />
        <NetRule />
        <NetValue $top={6}>1.0</NetValue>
        <NetRate>
          <svg width="7" height="10" viewBox="0 0 7 10"><path d="M3.5 0 L7 4 H4.5 V10 H2.5 V4 H0 Z" fill="#35a8ff" /></svg>
          K/s
        </NetRate>
        <NetValue $top={2}>6.9</NetValue>
        <NetRate>
          <svg width="7" height="10" viewBox="0 0 7 10"><path d="M3.5 10 L7 6 H4.5 V0 H2.5 V6 H0 Z" fill="#1cc45c" /></svg>
          K/s
        </NetRate>
      </NetWidget>
    </Page>
  );
}
